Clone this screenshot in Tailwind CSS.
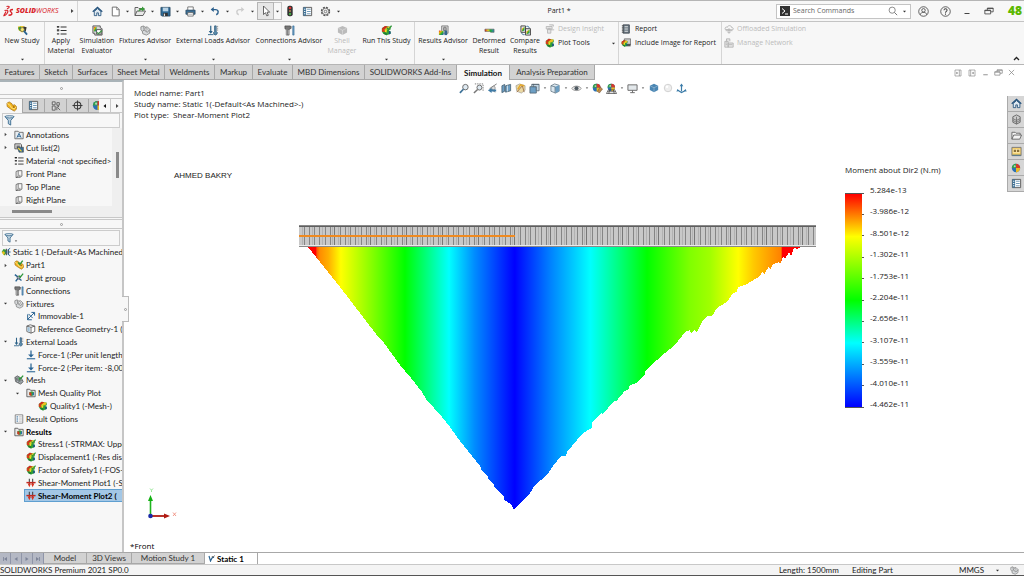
<!DOCTYPE html>
<html lang="en">
<head>
    <meta charset="UTF-8">
    <meta name="viewport" content="width=device-width, initial-scale=1.0">
    <title>Part1 - SOLIDWORKS Simulation</title>
    <script src="https://cdn.jsdelivr.net/npm/@tailwindcss/browser@4"></script>
</head>
<body class="h-screen flex flex-col overflow-hidden bg-white text-[#222] text-[7px] leading-[10px] whitespace-nowrap font-['Open_Sans','Noto_Sans',sans-serif]">

    <!-- Icon set -->
    <svg width="0" height="0" class="absolute" aria-hidden="true">
        <defs>
            <linearGradient id="rain" x1="0" y1="0" x2="1" y2="1"><stop offset="0" stop-color="#e02010"/><stop offset=".3" stop-color="#f5b010"/><stop offset=".6" stop-color="#30b030"/><stop offset="1" stop-color="#1050c0"/></linearGradient>
            <symbol id="dot" viewBox="0 0 6 6"><path d="M1.200 2.200h3.600L3 4.200z" fill="#333"/></symbol>
            <symbol id="right" viewBox="0 0 6 6"><path d="M2 1v4l2.500-2z" fill="#444"/></symbol>
            <symbol id="left" viewBox="0 0 6 6"><path d="M4 1v4L1.500 3z" fill="#111"/></symbol>
            <symbol id="home" viewBox="0 0 12 12"><path d="M2.500 6v4.500h2.700V7.500h1.800v3h2.700V6L6 2.800z" fill="#dfe9f1" stroke="#1f4e79" stroke-width=".9"/><path d="M.8 6.300L6 1.500l5.200 4.800" fill="none" stroke="#1f4e79" stroke-width="1.300"/></symbol>
            <symbol id="new" viewBox="0 0 12 12"><path d="M2.500 1.200h5L10 3.800v7H2.500z" fill="#fff" stroke="#666"/><path d="M7.300 1.200v2.800H10" fill="none" stroke="#666" stroke-width=".8"/></symbol>
            <symbol id="open" viewBox="0 0 12 12"><path d="M1 10.500v-8h3l1 1h5v2" fill="#eee" stroke="#555" stroke-width=".9"/><path d="M1 10.500L3 6h8.500L9 10.500z" fill="#e8e8e8" stroke="#555" stroke-width=".9"/><path d="M4.500 7c0-3 1.500-4 3.500-4V1.500L11 4 8 6.300V5C6.500 5 5.500 5.500 4.500 7z" fill="#3a9a3a"/></symbol>
            <symbol id="save" viewBox="0 0 12 12"><path d="M1 1.500h10v9.500H2L1 10z" fill="#2e6a96" stroke="#24435c" stroke-width=".8"/><path d="M3 1.800h6v4H3z" fill="#b9d3e5"/><path d="M3.500 7.500h5V11h-5z" fill="#333"/><path d="M4.200 8.300h1.300V11H4.200z" fill="#ddd"/></symbol>
            <symbol id="print" viewBox="0 0 12 12"><path d="M3 1h6v4H3z" fill="#fff" stroke="#555" stroke-width=".8"/><path d="M1 4.500h10V9H1z" fill="#3b7097" stroke="#24435c" stroke-width=".8"/><path d="M3 7h6v4H3z" fill="#fff" stroke="#555" stroke-width=".8"/><path d="M4 9h4" stroke="#888" stroke-width=".7"/></symbol>
            <symbol id="undo" viewBox="0 0 12 12"><path d="M3 4.300h3.500c4 0 4.500 4.500 1 6.200" fill="none" stroke="currentColor" stroke-width="1.700"/><path d="M.8 4.300l3.700-3v6z" fill="currentColor"/></symbol>
            <symbol id="pointer" viewBox="0 0 12 12"><path d="M3.500 1v8.500l2-1.800 1.300 3.200 1.500-.6L7 7.200h2.700z" fill="#fff" stroke="#444" stroke-width=".8"/></symbol>
            <symbol id="traffic" viewBox="0 0 12 12"><rect x="3.300" y=".8" width="5.400" height="10.400" rx="2" fill="#333"/><circle cx="6" cy="3" r="1.300" fill="#d33"/><circle cx="6" cy="6" r="1.100" fill="#a85"/><circle cx="6" cy="9" r="1.200" fill="#4a4"/></symbol>
            <symbol id="list" viewBox="0 0 12 12"><path d="M1.500 1.500h9v9h-9z" fill="#fff" stroke="#555"/><path d="M1.500 1.500h3v9h-3z" fill="#3b7097"/><path d="M5.500 3.500h4M5.500 6h4M5.500 8.500h4" stroke="#6590b0"/><path d="M2.200 3.500h1.500M2.200 6h1.500M2.200 8.500h1.500" stroke="#fff"/></symbol>
            <symbol id="gear" viewBox="0 0 12 12"><circle cx="6" cy="6" r="4.300" fill="none" stroke="#555" stroke-width="1.600" stroke-dasharray="2.200 1.177"/><circle cx="6" cy="6" r="3.500" fill="#f7f7f7" stroke="#555" stroke-width=".8"/><circle cx="6" cy="6" r="1.400" fill="none" stroke="#555" stroke-width=".8"/></symbol>
            <symbol id="search" viewBox="0 0 12 12"><circle cx="5" cy="5" r="3.700" fill="none" stroke="#777"/><path d="M7.700 7.700L11 11" stroke="#777" stroke-width="1.200"/></symbol>
            <symbol id="user" viewBox="0 0 12 12"><g fill="none" stroke="#444" stroke-width=".9"><circle cx="6" cy="6" r="5.200"/><circle cx="6" cy="4.700" r="1.900"/><path d="M2.500 9.500C3 7.500 4 7 6 7s3 .5 3.500 2.500"/></g></symbol>
            <symbol id="help" viewBox="0 0 12 12"><g fill="none" stroke="#444" stroke-width=".9"><circle cx="6" cy="6" r="5.200"/><path d="M4.300 4.600C4.500 2.300 7.800 2.500 7.700 4.600 7.600 5.800 6 5.800 6 7.300M6 8.300v1.200" stroke-width="1.100"/></g></symbol>
            <symbol id="restore" viewBox="0 0 12 12"><path d="M4 5V2.500h7V7H8M1 5h7v4.500H1zM1 5.500h7M4 3h7" fill="none" stroke="currentColor"/></symbol>
            <symbol id="min" viewBox="0 0 12 12"><path d="M3 9h6" stroke="currentColor" stroke-width="1.200"/></symbol>
            <symbol id="close" viewBox="0 0 12 12"><path d="M2.500 2.500l7 7m0-7l-7 7" stroke="currentColor"/></symbol>
            <symbol id="study" viewBox="0 0 12 12"><path d="M1 1.500l5-.5 4 1.500-1 5L5 8 1.500 5.500z" fill="#eec31c"/><path d="M1 3l3-1.500 1.500 3L3 6.500z" fill="#3f9a3a"/><path d="M7 1.500l3.500 1-1 4.500-3-2z" fill="#333"/><circle cx="5.800" cy="5" r="2.200" fill="#f8e870" stroke="#555" stroke-width=".7"/><path d="M7.500 6.500l3.500 4" stroke="#2b6594" stroke-width="2"/></symbol>
            <symbol id="studynode" viewBox="0 0 12 12"><path d="M.8 6L3 2.500l3 .8 1 4-3 3z" fill="#3f9a3a"/><path d="M.8 6l2.500-1 1.500 2-1.500 3z" fill="#eec31c"/><path d="M6.500 2v8M9 3.500v5" stroke="#555" stroke-width="1.300"/><path d="M5 6h6.500M7.500 4L11 1.500M7.500 8l3.500 2.500" stroke="#2b6594" stroke-width="1.200"/></symbol>
            <symbol id="material" viewBox="0 0 12 12"><path d="M1 1.300h2.500v2H1zM1 5h2.500v2H1zM1 8.700h2.500v2H1z" fill="#777"/><path d="M1 1.300h2.500v1H1zM1 5h2.500v1H1z" fill="#222"/><path d="M5 2.300h6.500M5 6h6.500M5 9.700h6.500" stroke="#333" stroke-width="1.100"/></symbol>
            <symbol id="evaluator" viewBox="0 0 12 12"><path d="M1 1h8v2l2 1v7H3V9H1z" fill="#d8d8d8" stroke="#555"/><path d="M2 2h3v5H2z" fill="url(#rain)"/><path d="M5 5h5v5H5z" fill="#fff" stroke="#333" stroke-width=".8"/><path d="M5.500 8l1.500 1.500L11 6" fill="none" stroke="#3c9342" stroke-width="1.300"/></symbol>
            <symbol id="fixtures" viewBox="0 0 12 12"><path d="M1 2l3-1 1.500 1.500L8 2l3 3-.5 4L7 11 3 9.500 2.500 7 1 5z" fill="#d6d9db" stroke="#777" stroke-width=".8"/><path d="M4 1.500l.5 4L8 8l2.500-3M4.500 5.500l-2 1.500" fill="none" stroke="#777" stroke-width=".8"/><circle cx="6.500" cy="4.500" r="1.300" fill="#f5f5f5" stroke="#777" stroke-width=".6"/></symbol>
            <symbol id="loads" viewBox="0 0 12 12"><path d="M3 .8v8M8 .8v5" stroke="#2c6288" stroke-width="1.300"/><path d="M.8 6.500h4.400L3 9.500z" fill="#2c6288"/><path d="M0 10.500h6" stroke="#2c6288"/><path d="M7.200 1h1.800v6a2 2 0 1 1-1.800 0z" fill="#5b8cab" stroke="#2c5575" stroke-width=".7"/><path d="M10.500 1v6" stroke="#777" stroke-dasharray="1 1"/></symbol>
            <symbol id="conn" viewBox="0 0 12 12"><path d="M1 1h6v3L5.500 5v6h-3V5L1 4z" fill="#777" stroke="#444" stroke-width=".7"/><path d="M3 5v6M5 5.500v5" stroke="#ddd" stroke-width=".6"/><path d="M7 4l1.500-1M7 2h1.500" stroke="#444" stroke-width=".8"/><path d="M9.500 1h1.500v10H9.500z" fill="#6e9dc0" stroke="#2b6594" stroke-width=".6"/></symbol>
            <symbol id="cube" viewBox="0 0 12 12"><path d="M6 1l5 2.300v5L6 11 1 8.300v-5z" fill="currentColor"/><path d="M1.500 3.500L6 5.700l4.500-2.200M6 5.700V11" fill="none" stroke="#fff" stroke-opacity=".5" stroke-width=".7"/></symbol>
            <symbol id="plot" viewBox="0 0 12 12"><path d="M1 3.500L4.500 1 10.500 2v3L8.500 6l2 1v2.500L6 11.300 2.500 9.500 1 7z" fill="#2f9e36"/><path d="M1 3.500L4.500 1l3 .5L4 4.500z" fill="#d8281d"/><path d="M4 4.500l3.500-3 3 .5L9 4.800 6.500 5.300z" fill="#f0c01e"/><path d="M1 3.500l3 1L4.300 8 1 7z" fill="#dd3a1a"/><path d="M4 4.500l2.500.8L6 8.500 4.300 8z" fill="#f2dd23"/><path d="M4.300 8L6 8.500l.3 2.800-3.800-1.800z" fill="#1f7f32"/><path d="M8.700 6.500l1.800.5v2.500l-2 .8z" fill="#184f8a"/></symbol>
            <symbol id="plotcheck" viewBox="0 0 12 12"><use href="#plot"/><path d="M6.500 3l1.500 2L11.500.8" fill="none" stroke="#2d963a" stroke-width="1.400"/></symbol>
            <symbol id="results" viewBox="0 0 12 12"><path d="M4 1h7v8H4z" fill="#ddd" stroke="#666" stroke-width=".8"/><path d="M6 3c0-1 3-1 3 0v3H6z" fill="#aaa" stroke="#555" stroke-width=".6"/><path d="M1 6l5 .5V11H1z" fill="url(#rain)"/><path d="M7 6h3v5H7z" fill="#33658a"/></symbol>
            <symbol id="deformed" viewBox="0 0 12 12"><linearGradient id="bar"><stop offset="0" stop-color="#d22"/><stop offset=".35" stop-color="#ed2"/><stop offset=".6" stop-color="#2a3"/><stop offset="1" stop-color="#38b"/></linearGradient><path d="M1 4.500h10v3.500H7.500L6 7H1z" fill="url(#bar)" stroke="#555" stroke-width=".6"/></symbol>
            <symbol id="compare" viewBox="0 0 12 12"><path d="M1 1h5v7H1zM6 4h5.500v7H6z" fill="#e5e5e5" stroke="#444"/><path d="M2 4l3-2v4L2 7z" fill="url(#rain)"/><path d="M7 7l3.500-2v4L7 10z" fill="url(#rain)"/><path d="M7 1.500c2-.5 3 .5 3 2M5 10.500c-2 .3-3-.5-3-2" fill="none" stroke="#2b6594"/></symbol>
            <symbol id="insight" viewBox="0 0 12 12"><path d="M1.500 3h7v3h-7zM3 6h4v5H3zM7 7h4M5 1h5v2" fill="#e5e5e5" stroke="#b5b5b5"/><circle cx="5" cy="6" r="1.500" fill="#bbb"/></symbol>
            <symbol id="report" viewBox="0 0 12 12"><path d="M2.500 1h7.500v10H2.500z" fill="#6d7a84" stroke="#3d464d"/><path d="M4.300 3h4M4.300 5h4M4.300 7h4M4.300 9h4" stroke="#eee" stroke-width=".8"/><path d="M1 2h2M1 4h2M1 6h2M1 8h2M1 10h2" stroke="#444" stroke-width=".8"/></symbol>
            <symbol id="include" viewBox="0 0 12 12"><path d="M4 1h7.500v7H4z" fill="#ccc" stroke="#555" stroke-width=".8"/><path d="M5.500 7h6v3h-6z" fill="#555"/><g transform="translate(0 2) scale(.75)"><use href="#plot" width="12" height="12"/></g></symbol>
            <symbol id="offload" viewBox="0 0 12 12"><path d="M1.500 6.500C.5 4 3 3 4 4c.5-3 5-2.500 5 0 2 0 2.500 2 1.500 3zM2 8h8M6 5v6M4 9.500L6 11l2-1.500" fill="none" stroke="#b0b0b0"/></symbol>
            <symbol id="network" viewBox="0 0 12 12"><path d="M1 4h4v7H1zM5 6h6v5H5zM3 4V1h4v3" fill="#e6e6e6" stroke="#b0b0b0"/><path d="M2 6h2M2 8h2M6 8h4" stroke="#b0b0b0"/></symbol>
            <symbol id="part" viewBox="0 0 12 12"><path d="M1 2.500L3.500 1l3 2 .8 2 2-1 2 2v3L9 11 5.500 9 1.300 6z" fill="#f3b61f" stroke="#a56e10" stroke-width=".8"/><path d="M1.200 2.700l3 1.800L6 7.500l3 1 2-2" fill="none" stroke="#fbe28a"/><circle cx="8.500" cy="6.500" r="1" fill="#a56e10"/></symbol>
            <symbol id="partcheck" viewBox="0 0 12 12"><use href="#part"/><path d="M5 3l2 2.300L10.500.7" fill="none" stroke="#2d963a" stroke-width="1.700"/></symbol>
            <symbol id="config" viewBox="0 0 12 12"><path d="M1.500 1h3.500v3.500H1.500zM1.500 6h3.500v5H1.500zM7 2h3v3H7z" fill="#ddd" stroke="#555"/><path d="M7 6h2.500L8 8l3 3M7 7v4" fill="none" stroke="#555"/></symbol>
            <symbol id="target" viewBox="0 0 12 12"><circle cx="6" cy="6" r="3.700" fill="none" stroke="#333" stroke-width="1.100"/><path d="M6 .5v11M.5 6h11" stroke="#333"/></symbol>
            <symbol id="ball" viewBox="0 0 12 12"><circle cx="6" cy="6" r="5" fill="#2c70b4"/><path d="M6 6L1 6A5 5 0 0 1 6 1z" fill="#34a04a"/><path d="M6 6V1A5 5 0 0 1 11 6z" fill="#d8392a"/><path d="M6 6h5A5 5 0 0 1 6 11z" fill="#eab925"/><circle cx="4.500" cy="4" r="1.200" fill="#fff" fill-opacity=".6"/></symbol>
            <symbol id="funnel" viewBox="0 0 12 12"><path d="M1 1.500h10L7.300 6v5L4.700 9.500V6z" fill="#b9cfde" stroke="#2b5f85" stroke-width=".9"/><ellipse cx="6" cy="2" rx="4.700" ry="1.200" fill="#e6eff5" stroke="#2b5f85" stroke-width=".8"/></symbol>
            <symbol id="annot" viewBox="0 0 12 12"><path d="M1 10.500v-9h4l1 1.300h5v7.700z" fill="#e8edf1" stroke="#555" stroke-width=".9"/><path d="M3.500 9.200L6 4l2.500 5.200M4.300 7.500h3.400" fill="none" stroke="#2b6594" stroke-width="1.100"/></symbol>
            <symbol id="cut" viewBox="0 0 12 12"><path d="M1 1h7l1 1v5H1z" fill="#ddd" stroke="#444"/><path d="M3 3h4v3H3z" fill="#777"/><path d="M4 5h7.300v6H6z" fill="#3b7097" stroke="#333" stroke-width=".6"/><path d="M5 6l4 4" stroke="#f4cf32" stroke-width="1.500"/></symbol>
            <symbol id="plane" viewBox="0 0 12 12"><path d="M2.500 3L5 2v7l-2.500 1.500zM5 2h4.500v6.500L7 10H2.500M7 10V7" fill="none" stroke="#555" stroke-width=".9"/></symbol>
            <symbol id="joint" viewBox="0 0 12 12"><path d="M1 2l4 3 3-1M2 10l3-4 4 3" fill="none" stroke="#2b6594" stroke-width="1.700"/><circle cx="5.500" cy="5.500" r="1.800" fill="#9aabb8" stroke="#333" stroke-width=".6"/><path d="M6 3l1.500 2L11 .8" fill="none" stroke="#2d963a" stroke-width="1.500"/></symbol>
            <symbol id="immov" viewBox="0 0 12 12"><path d="M1.500 10.500L10 2M6.500 1.700H10.300V5.500M2 4v6.500h5M3 3.500l5 5" fill="none" stroke="#2b6594" stroke-width="1.200"/></symbol>
            <symbol id="refgeo" viewBox="0 0 12 12"><path d="M1 2.500L5 1l5.500 1.500V9L6 11 1 9z" fill="#fff" stroke="#444" stroke-width=".9"/><path d="M1 2.500l5 1.500 4.500-1.500M6 4v7" fill="none" stroke="#444" stroke-width=".9"/><path d="M1.800 3.500l2.700.8v5.200l-2.700-.8z" fill="#9dc0d8"/></symbol>
            <symbol id="force" viewBox="0 0 12 12"><path d="M6 .5v7" stroke="#2b6594" stroke-width="1.500"/><path d="M2.500 5.300h7L6 9z" fill="#2b6594"/><path d="M1 10.500h10" stroke="#2b6594" stroke-width="1.300"/></symbol>
            <symbol id="mesh" viewBox="0 0 12 12"><path d="M1 3l3-2 5 3 2 4-3 3-6-3z" fill="#aab3b8" stroke="#444" stroke-width=".8"/><path d="M2 5l7 4M4 2l-1 6M7 3L5.500 9.500M1 3l6 3.500 3.500.5" fill="none" stroke="#444" stroke-width=".5"/><path d="M5.500 3l1.500 2.300L11 .7" fill="none" stroke="#2d963a" stroke-width="1.600"/></symbol>
            <symbol id="folder" viewBox="0 0 12 12"><path d="M1 10.500v-9h3.500l1 1.300H11v7.700z" fill="#e8e8e8" stroke="#444" stroke-width=".9"/><path d="M4 5l3-1 2.500 1v3.500L7 9.700 4 8.500z" fill="#3c9d3e"/><path d="M4 5l2.500.7v4L4 8.500z" fill="#d63322"/><path d="M8 6l1.500-1v3.500L8 9z" fill="#236fb5"/></symbol>
            <symbol id="options" viewBox="0 0 12 12"><path d="M1.500 1h9v10h-9z" fill="#fff" stroke="#777"/><path d="M3 3.500h2M3 6h2M3 8.500h2" stroke="#2b6594" stroke-width="1.200"/><path d="M6 3.500h3.500M6 6h3.500M6 8.500h3.500" stroke="#999" stroke-width=".8"/></symbol>
            <symbol id="shear" viewBox="0 0 12 12"><path d="M4 1v7M8 1v7" stroke="#444" stroke-width="1.300"/><path d="M.5 5.500h11" stroke="#c22a22" stroke-width="1.700"/><path d="M2 6.500h4L4 11zM6 6.500h4L8 11z" fill="#d8321f"/></symbol>
            <symbol id="zoomfit" viewBox="0 0 12 12"><circle cx="7" cy="4.500" r="3" fill="#dfeaf2" stroke="#666"/><path d="M4.800 6.800L1 10.800" stroke="#3b7097" stroke-width="1.800"/></symbol>
            <symbol id="zoomarea" viewBox="0 0 12 12"><path d="M2 1h9v8" fill="none" stroke="#777" stroke-dasharray="1.500 1"/><circle cx="7" cy="5" r="2.700" fill="#dfeaf2" stroke="#666"/><path d="M5 7l-4 4" stroke="#777" stroke-width="1.600"/></symbol>
            <symbol id="prev" viewBox="0 0 12 12"><path d="M10.500 1L3 6l6 4" fill="none" stroke="#777"/><circle cx="7" cy="5.500" r="2" fill="#ddd" stroke="#777" stroke-width=".7"/><path d="M1 8l4-2.500v1.700h5v2H5V11z" fill="#3e7ba6"/></symbol>
            <symbol id="section" viewBox="0 0 12 12"><path d="M1 3l3-1.500V9L1 10.500zM5 3l5.500-1.500v7L5 10z" fill="#6d9fc4" stroke="#3c5566" stroke-width=".8"/><path d="M7 2.800v6.500" stroke="#dce8f0"/></symbol>
            <symbol id="wand" viewBox="0 0 12 12"><path d="M1 3l4-2 6 2v5l-4 3-5-2z" fill="#ead9a4" stroke="#888" stroke-width=".6"/><path d="M2 10L8 3l2 7" stroke="#a0714a" fill="none"/><path d="M3 7l3-5 4 1" fill="none" stroke="#e3a72a" stroke-width="1.500"/></symbol>
            <symbol id="orient" viewBox="0 0 12 12"><path d="M1 4h7v7H1z" fill="#6d9fc4" stroke="#4c5d69" stroke-width=".8"/><path d="M3 4V1.500h8V8.500H8V4z" fill="#c2d6e4" stroke="#4c5d69" stroke-width=".8"/><path d="M3 1.500h8M5 1v3" stroke="#4c5d69" stroke-width=".7"/></symbol>
            <symbol id="display" viewBox="0 0 12 12"><path d="M1 3l4-2 5 1.500V9l-4 2-5-2z" fill="#dbe7ef" stroke="#5b6f7d" stroke-width=".8"/><path d="M5.500 4L10 2.500V9l-4 2z" fill="#6b9dc1"/><path d="M1 3l4.500 1.200V11" fill="none" stroke="#5b6f7d" stroke-width=".8"/></symbol>
            <symbol id="eye" viewBox="0 0 12 12"><path d="M.8 6C3 2.500 9 2.500 11.200 6 9 9 3 9 .8 6z" fill="#eee" stroke="#777" stroke-width=".8"/><circle cx="6" cy="5.800" r="2.200" fill="#4f5a62"/></symbol>
            <symbol id="appear" viewBox="0 0 12 12"><g transform="scale(.85)"><use href="#ball" width="12" height="12"/></g><path d="M6 9l3-4.500 2.500 2L8 11z" fill="#bf8a50" stroke="#6f5230" stroke-width=".6"/></symbol>
            <symbol id="scene" viewBox="0 0 12 12"><g transform="translate(1 0) scale(.8)"><use href="#ball" width="12" height="12"/></g><path d="M.5 11.500l2-4h7l2 4zM4 7.500l-1 4M8 7.500l1 4M2 9.500h8" fill="none" stroke="#444" stroke-width=".8"/></symbol>
            <symbol id="monitor" viewBox="0 0 12 12"><path d="M1 2h10v6H1z" fill="#e3e8eb" stroke="#666"/><path d="M6 8v2.500M3.500 10.500h5" stroke="#666"/></symbol>
            <symbol id="triadup" viewBox="0 0 12 12"><path d="M6 9V2M2 8l4 2.500L11 8" fill="none" stroke="#3b7ba8" stroke-width="1.300"/><path d="M4 3.500L6 .5l2 3zM.5 9.500l1-3 2 2zM11.500 9.500l-1-3-2 2z" fill="#3b7ba8"/></symbol>
            <symbol id="openfolder" viewBox="0 0 12 12"><path d="M1 10V2.500h3.500l1 1H10v2M1 10l2-4.500h8.500L9.500 10z" fill="#f3f3f3" stroke="#666"/></symbol>
            <symbol id="library" viewBox="0 0 12 12"><path d="M2 3l4-2 4 2v6l-4 2-4-2z" fill="#ccc" stroke="#666"/><path d="M2 5l4 2 4-2M2 7l4 2 4-2M6 3v8" fill="none" stroke="#666" stroke-width=".8"/></symbol>
            <symbol id="palette" viewBox="0 0 12 12"><path d="M1 1.500h10v9H1z" fill="#f3c95c" stroke="#777"/><path d="M2 3h8v5H2z" fill="#f8e2a0"/><path d="M3 4h2.500v2.500H3zM6.500 4H9v2.500H6.500z" fill="#8a7038"/><path d="M1.500 10h9" stroke="#3b7097"/></symbol>
            <symbol id="paneicon" viewBox="0 0 12 12"><path d="M1.500 1.500h9v9h-9zM4 1.500v9" fill="none" stroke="#888"/><path d="M5.500 6l3-2v4z" fill="#888"/></symbol>
        </defs>
    </svg>

    <!-- Title bar -->
    <header class="flex items-center h-[22px] shrink-0 bg-[#f7f7f7] border-t border-b border-t-[#b5b5b5] border-b-[#c4c4c4]">
        <div class="flex items-center w-[78px] h-full border-r border-[#d5d5d5] pl-[3px]">
            <svg class="w-[11px] h-3" viewBox="0 0 11 12" fill="none" stroke="#d8232a"><path d="M3.500 1.500c3-.8 4 .8.5 2.500M1.500 5.500c4-1 4 1 2.500 3C3 10 1.500 10.800.5 11M3 6.500L.7 11" stroke-width="1.200"/><path d="M10 4.500C7 4.500 6.500 5.800 8 7s1.500 3.300-2.500 3.300" stroke-width="1.400"/></svg>
            <span class="ml-[2px] text-[#d8232a] italic"><b class="font-extrabold">SOLID</b>WORKS</span>
            <button class="ml-auto mr-[2px]" aria-label="Expand menu"><svg class="size-[6px]"><use href="#right"/></svg></button>
        </div>
        <nav class="flex items-center pl-[8px] text-[#2b5f8c]" aria-label="Quick access">
            <button class="w-[22px] flex justify-center" aria-label="Home"><svg class="size-[11px]"><use href="#home"/></svg></button>
            <button class="w-[14px] flex justify-center" aria-label="New"><svg class="size-[11px]"><use href="#new"/></svg></button>
            <button class="w-[11px] flex justify-center" aria-label="New menu"><svg class="size-[5px]"><use href="#dot"/></svg></button>
            <button class="w-[14px] flex justify-center" aria-label="Open"><svg class="size-[12px]"><use href="#open"/></svg></button>
            <button class="w-[11px] flex justify-center" aria-label="Open menu"><svg class="size-[5px]"><use href="#dot"/></svg></button>
            <button class="w-[14px] flex justify-center" aria-label="Save"><svg class="size-[11px]"><use href="#save"/></svg></button>
            <button class="w-[11px] flex justify-center" aria-label="Save menu"><svg class="size-[5px]"><use href="#dot"/></svg></button>
            <button class="w-[14px] flex justify-center" aria-label="Print"><svg class="size-[11px]"><use href="#print"/></svg></button>
            <button class="w-[11px] flex justify-center" aria-label="Print menu"><svg class="size-[5px]"><use href="#dot"/></svg></button>
            <button class="w-[14px] flex justify-center" aria-label="Undo"><svg class="size-[10px]"><use href="#undo"/></svg></button>
            <button class="w-[11px] flex justify-center" aria-label="Undo menu"><svg class="size-[5px]"><use href="#dot"/></svg></button>
            <button class="w-[14px] flex justify-center text-[#ccc]" aria-label="Redo"><svg class="size-[10px] -scale-x-100"><use href="#undo"/></svg></button>
            <button class="w-[10px] flex justify-center" aria-label="Redo menu"><svg class="size-[5px]"><use href="#dot"/></svg></button>
            <button class="w-[17px] h-[18px] flex justify-center items-center bg-[#e6e6e6] border border-[#b5b5b5]" aria-label="Select"><svg class="size-[12px]"><use href="#pointer"/></svg></button>
            <button class="w-[8px] h-[18px] flex justify-center items-center border border-l-0 border-[#c5c5c5]" aria-label="Select menu"><svg class="size-[5px]"><use href="#dot"/></svg></button>
            <button class="w-[16px] flex justify-center" aria-label="Rebuild"><svg class="size-[12px]"><use href="#traffic"/></svg></button>
            <button class="w-[18px] flex justify-center" aria-label="File properties"><svg class="size-[11px]"><use href="#list"/></svg></button>
            <button class="w-[18px] flex justify-center" aria-label="Options"><svg class="size-[11px]"><use href="#gear"/></svg></button>
            <button class="w-[8px] flex justify-center" aria-label="Options menu"><svg class="size-[5px]"><use href="#dot"/></svg></button>
        </nav>
        <h1 class="flex-1 text-center">Part1 *</h1>
        <div class="flex items-center w-[135px] h-[15px] bg-white border border-[#c4c4c4] px-[3px]">
            <svg class="size-[10px]" viewBox="0 0 10 10"><path d="M0 0h10v10H0z" fill="#333"/><path d="M2 2.500L5 5 2 7.500M5 8h3" fill="none" stroke="#fff"/></svg>
            <input type="text" aria-label="Search Commands" placeholder="Search Commands" class="flex-1 min-w-0 ml-[3px] outline-none placeholder:text-[#666]">
            <button aria-label="Search"><svg class="size-[10px]"><use href="#search"/></svg></button>
            <button class="ml-[4px]" aria-label="Search menu"><svg class="size-[5px]"><use href="#dot"/></svg></button>
        </div>
        <div class="flex items-center w-[113px] text-[#444]">
            <button class="w-[24px] flex justify-center" aria-label="Account"><svg class="size-[11px]"><use href="#user"/></svg></button>
            <button class="w-[20px] flex justify-center" aria-label="Help"><svg class="size-[11px]"><use href="#help"/></svg></button>
            <button class="w-[24px] flex justify-center" aria-label="Minimize"><svg class="size-[10px]"><use href="#min"/></svg></button>
            <button class="w-[20px] flex justify-center" aria-label="Restore"><svg class="size-[10px]"><use href="#restore"/></svg></button>
            <span class="flex-1 pr-[2px] text-right text-[#5cb800] text-[12px] leading-[14px] font-extrabold">48</span>
        </div>
    </header>

    <!-- Ribbon -->
    <section class="flex h-[43px] shrink-0 bg-[#f7f7f7] border-b border-[#b5b5b5]" aria-label="Simulation ribbon">
        <button class="w-[45px] border-r border-[#d5d5d5] pt-[3px] flex flex-col items-center"><svg class="size-[11px] shrink-0"><use href="#study"/></svg><span>New Study</span><svg class="size-[5px] mt-auto mb-[2px]"><use href="#dot"/></svg></button>
        <button class="w-[32px] pt-[3px] flex flex-col items-center"><svg class="size-[11px] shrink-0"><use href="#material"/></svg><span>Apply<br>Material</span></button>
        <button class="w-[40px] pt-[3px] flex flex-col items-center"><svg class="size-[11px] shrink-0"><use href="#evaluator"/></svg><span>Simulation<br>Evaluator</span></button>
        <button class="w-[56px] pt-[3px] flex flex-col items-center"><svg class="size-[11px] shrink-0"><use href="#fixtures"/></svg><span>Fixtures Advisor</span><svg class="size-[5px] mt-auto mb-[2px]"><use href="#dot"/></svg></button>
        <button class="w-[80px] pt-[3px] flex flex-col items-center"><svg class="size-[11px] shrink-0"><use href="#loads"/></svg><span>External Loads Advisor</span><svg class="size-[5px] mt-auto mb-[2px]"><use href="#dot"/></svg></button>
        <button class="w-[72px] pt-[3px] flex flex-col items-center"><svg class="size-[11px] shrink-0"><use href="#conn"/></svg><span>Connections Advisor</span><svg class="size-[5px] mt-auto mb-[2px]"><use href="#dot"/></svg></button>
        <button class="w-[34px] pt-[3px] flex flex-col items-center text-[#bbb]" disabled><svg class="size-[11px] shrink-0"><use href="#cube"/></svg><span>Shell<br>Manager</span></button>
        <button class="w-[56px] border-r border-[#d5d5d5] pt-[3px] flex flex-col items-center"><svg class="size-[11px] shrink-0"><use href="#plotcheck"/></svg><span>Run This Study</span><svg class="size-[5px] mt-auto mb-[2px]"><use href="#dot"/></svg></button>
        <button class="w-[56px] pt-[3px] flex flex-col items-center"><svg class="size-[11px] shrink-0"><use href="#results"/></svg><span>Results Advisor</span><svg class="size-[5px] mt-auto mb-[2px]"><use href="#dot"/></svg></button>
        <button class="w-[36px] pt-[3px] flex flex-col items-center"><svg class="size-[11px] shrink-0"><use href="#deformed"/></svg><span>Deformed<br>Result</span></button>
        <button class="w-[36px] pt-[3px] flex flex-col items-center"><svg class="size-[11px] shrink-0"><use href="#compare"/></svg><span>Compare<br>Results</span></button>
        <div class="w-[76px] border-r border-[#d5d5d5] pl-[2px] pt-[2px] flex flex-col gap-[4px]">
            <button class="flex items-center gap-[3px] text-[#bbb]" disabled><svg class="size-[10px]"><use href="#insight"/></svg>Design Insight</button>
            <button class="flex items-center gap-[3px]"><svg class="size-[10px]"><use href="#plot"/></svg>Plot Tools<svg class="size-[5px] ml-auto mr-[2px]"><use href="#dot"/></svg></button>
        </div>
        <div class="w-[103px] border-r border-[#d5d5d5] pl-[2px] pt-[2px] flex flex-col gap-[4px]">
            <button class="flex items-center gap-[4px]"><svg class="size-[10px]"><use href="#report"/></svg>Report</button>
            <button class="flex items-center gap-[4px]"><svg class="size-[10px]"><use href="#include"/></svg>Include Image for Report</button>
        </div>
        <div class="pl-[2px] pt-[2px] flex flex-col gap-[4px] text-[#bbb]">
            <button class="flex items-center gap-[3px]" disabled><svg class="size-[10px]"><use href="#offload"/></svg>Offloaded Simulation</button>
            <button class="flex items-center gap-[3px]" disabled><svg class="size-[10px]"><use href="#network"/></svg>Manage Network</button>
        </div>
        <button class="ml-auto self-end mr-[4px] mb-[3px]" aria-label="Collapse ribbon"><svg class="w-[7px] h-[5px]" viewBox="0 0 7 5"><path d="M1 4l2.500-2.500L6 4" fill="none" stroke="#222" stroke-width="1.300"/></svg></button>
    </section>

    <!-- Command tabs -->
    <nav class="flex h-[15px] shrink-0 bg-white text-[#333] text-[8px] font-['Lato','Open_Sans',sans-serif]" aria-label="Command tabs">
        <button class="w-[40px] bg-[#d2d2d2] border-r border-b border-[#a8a8a8]">Features</button>
        <button class="w-[33px] bg-[#d2d2d2] border-r border-b border-[#a8a8a8]">Sketch</button>
        <button class="w-[40px] bg-[#d2d2d2] border-r border-b border-[#a8a8a8]">Surfaces</button>
        <button class="w-[52px] bg-[#d2d2d2] border-r border-b border-[#a8a8a8]">Sheet Metal</button>
        <button class="w-[50px] bg-[#d2d2d2] border-r border-b border-[#a8a8a8]">Weldments</button>
        <button class="w-[38px] bg-[#d2d2d2] border-r border-b border-[#a8a8a8]">Markup</button>
        <button class="w-[40px] bg-[#d2d2d2] border-r border-b border-[#a8a8a8]">Evaluate</button>
        <button class="w-[72px] bg-[#d2d2d2] border-r border-b border-[#a8a8a8]">MBD Dimensions</button>
        <button class="w-[92px] bg-[#d2d2d2] border-r border-b border-[#a8a8a8]">SOLIDWORKS Add-Ins</button>
        <button class="w-[53px] bg-[#f7f7f7] border-r border-[#a8a8a8] font-bold text-[#111]">Simulation</button>
        <button class="w-[85px] bg-[#d2d2d2] border-r border-b border-[#a8a8a8]">Analysis Preparation</button>
        <div class="ml-auto flex items-center text-[#888] pr-[6px]">
            <button class="w-[14px] flex justify-center" aria-label="Previous pane"><svg class="size-[8px] -scale-x-100"><use href="#paneicon"/></svg></button>
            <button class="w-[14px] flex justify-center" aria-label="Next pane"><svg class="size-[8px]"><use href="#paneicon"/></svg></button>
            <button class="w-[13px] flex justify-center" aria-label="Minimize document"><svg class="size-[9px]"><use href="#min"/></svg></button>
            <button class="w-[13px] flex justify-center" aria-label="Restore document"><svg class="size-[9px]"><use href="#restore"/></svg></button>
            <button class="w-[13px] flex justify-center" aria-label="Close document"><svg class="size-[9px]"><use href="#close"/></svg></button>
        </div>
    </nav>

    <div class="flex-1 min-h-0 flex">
        <!-- Feature manager and study tree -->
        <aside class="relative w-[124px] shrink-0 bg-[#f7f7f7] border-t-2 border-r-2 border-t-[#a9b3b8] border-r-[#c6c6c6] flex flex-col text-[8px] font-['Lato','Open_Sans',sans-serif]">
            <div class="h-[13px] flex items-center justify-center border-b border-[#c8c8c8]"><span class="size-[3px] rounded-full border border-[#999]"></span></div>
            <div class="h-[4px] border-b border-[#c8c8c8]"></div>
            <div class="flex h-[14px] shrink-0" role="tablist">
                <button class="w-[22px] flex items-center justify-center bg-[#f7f7f7]" aria-label="Feature tree"><svg class="size-[11px]"><use href="#part"/></svg></button>
                <button class="w-[22px] flex items-center justify-center bg-[#d2d2d2] border-l border-b border-[#a8a8a8]" aria-label="Properties"><svg class="size-[11px]"><use href="#list"/></svg></button>
                <button class="w-[22px] flex items-center justify-center bg-[#d2d2d2] border-l border-b border-[#a8a8a8]" aria-label="Configurations"><svg class="size-[10px]"><use href="#config"/></svg></button>
                <button class="w-[22px] flex items-center justify-center bg-[#d2d2d2] border-l border-b border-[#a8a8a8]" aria-label="Dimensions"><svg class="size-[11px]"><use href="#target"/></svg></button>
                <button class="w-[11px] overflow-hidden flex items-center bg-[#d2d2d2] border-l border-b border-[#a8a8a8] pl-[3px]" aria-label="Display manager"><svg class="size-[11px] shrink-0"><use href="#ball"/></svg></button>
                <button class="w-[11px] flex items-center justify-center border-b border-[#c8c8c8]" aria-label="Scroll tabs left"><svg class="size-[6px]"><use href="#left"/></svg></button>
                <button class="w-[12px] flex items-center justify-center border-l border-b border-[#c8c8c8]" aria-label="Scroll tabs right"><svg class="size-[6px]"><use href="#right"/></svg></button>
            </div>
            <label class="flex items-center h-[15px] shrink-0 mx-[2px] border border-[#ccc] pl-[1px]"><svg class="size-[11px] shrink-0"><use href="#funnel"/></svg><input type="text" aria-label="Filter feature tree" class="min-w-0 flex-1 outline-none"></label>
            <div class="flex h-[78px] shrink-0">
                <ul class="w-[112px] overflow-hidden grid auto-rows-fr pl-[3px]">
                    <li class="flex items-center"><svg class="size-[5px] mr-[6px]"><use href="#right"/></svg><svg class="size-[10px] mr-[2px]"><use href="#annot"/></svg>Annotations</li>
                    <li class="flex items-center"><svg class="size-[5px] mr-[6px]"><use href="#right"/></svg><svg class="size-[10px] mr-[2px]"><use href="#cut"/></svg>Cut list(2)</li>
                    <li class="flex items-center pl-[11px]"><svg class="size-[10px] mr-[2px] shrink-0"><use href="#material"/></svg>Material &lt;not specified&gt;</li>
                    <li class="flex items-center pl-[11px]"><svg class="size-[10px] mr-[2px]"><use href="#plane"/></svg>Front Plane</li>
                    <li class="flex items-center pl-[11px]"><svg class="size-[10px] mr-[2px]"><use href="#plane"/></svg>Top Plane</li>
                    <li class="flex items-center pl-[11px]"><svg class="size-[10px] mr-[2px]"><use href="#plane"/></svg>Right Plane</li>
                </ul>
                <div class="flex-1 bg-[#efefef] flex justify-center pt-[24px]"><span class="w-[3px] h-[26px] bg-[#8a8a8a]"></span></div>
            </div>
            <div class="h-[11px] shrink-0 bg-[#efefef] flex items-center pl-[12px]"><span class="w-[40px] h-[3px] bg-[#8a8a8a]"></span></div>
            <div class="h-[3px] shrink-0 border-t border-b border-[#c8c8c8]"></div>
            <div class="h-[9px] shrink-0 flex items-center justify-center border-b border-[#c8c8c8]"><span class="size-[3px] rounded-full border border-[#999]"></span></div>
            <label class="flex items-center h-[16px] shrink-0 mt-[1px] mx-[2px] border border-[#ccc] pl-[1px]"><svg class="size-[10px] shrink-0"><use href="#funnel"/></svg><svg class="size-[4px] self-end mb-[2px]"><use href="#dot"/></svg><input type="text" aria-label="Filter study tree" class="min-w-0 flex-1 outline-none"></label>
            <ul class="h-64 shrink-0 overflow-hidden grid auto-rows-fr">
                <li class="flex items-center pl-[1px]"><svg class="size-[10px] mr-[2px] shrink-0"><use href="#studynode"/></svg>Static 1 (-Default&lt;As Machined</li>
                <li class="flex items-center pl-[3px]"><svg class="size-[5px] mr-[6px]"><use href="#right"/></svg><svg class="size-[10px] mr-[2px]"><use href="#partcheck"/></svg>Part1</li>
                <li class="flex items-center pl-[14px]"><svg class="size-[10px] mr-[2px]"><use href="#joint"/></svg>Joint group</li>
                <li class="flex items-center pl-[14px]"><svg class="size-[10px] mr-[2px]"><use href="#conn"/></svg>Connections</li>
                <li class="flex items-center pl-[3px]"><svg class="size-[5px] mr-[6px]"><use href="#dot"/></svg><svg class="size-[10px] mr-[2px]"><use href="#fixtures"/></svg>Fixtures</li>
                <li class="flex items-center pl-[26px]"><svg class="size-[10px] mr-[2px]"><use href="#immov"/></svg>Immovable-1</li>
                <li class="flex items-center pl-[26px]"><svg class="size-[10px] mr-[2px] shrink-0"><use href="#refgeo"/></svg>Reference Geometry-1 (</li>
                <li class="flex items-center pl-[3px]"><svg class="size-[5px] mr-[6px]"><use href="#dot"/></svg><svg class="size-[10px] mr-[2px]"><use href="#loads"/></svg>External Loads</li>
                <li class="flex items-center pl-[26px]"><svg class="size-[10px] mr-[2px] shrink-0"><use href="#force"/></svg>Force-1 (:Per unit length</li>
                <li class="flex items-center pl-[26px]"><svg class="size-[10px] mr-[2px] shrink-0"><use href="#force"/></svg>Force-2 (:Per item: -8,00</li>
                <li class="flex items-center pl-[3px]"><svg class="size-[5px] mr-[6px]"><use href="#dot"/></svg><svg class="size-[10px] mr-[2px]"><use href="#mesh"/></svg>Mesh</li>
                <li class="flex items-center pl-[15px]"><svg class="size-[5px] mr-[6px]"><use href="#dot"/></svg><svg class="size-[10px] mr-[2px]"><use href="#folder"/></svg>Mesh Quality Plot</li>
                <li class="flex items-center pl-[38px]"><svg class="size-[10px] mr-[2px]"><use href="#plot"/></svg>Quality1 (-Mesh-)</li>
                <li class="flex items-center pl-[14px]"><svg class="size-[10px] mr-[2px]"><use href="#options"/></svg>Result Options</li>
                <li class="flex items-center pl-[3px] font-bold text-black"><svg class="size-[5px] mr-[6px]"><use href="#dot"/></svg><svg class="size-[10px] mr-[2px]"><use href="#folder"/></svg>Results</li>
                <li class="flex items-center pl-[26px]"><svg class="size-[10px] mr-[2px] shrink-0"><use href="#plotcheck"/></svg>Stress1 (-STRMAX: Uppe</li>
                <li class="flex items-center pl-[26px]"><svg class="size-[10px] mr-[2px] shrink-0"><use href="#plotcheck"/></svg>Displacement1 (-Res dis</li>
                <li class="flex items-center pl-[26px]"><svg class="size-[10px] mr-[2px] shrink-0"><use href="#plotcheck"/></svg>Factor of Safety1 (-FOS-</li>
                <li class="flex items-center pl-[26px]"><svg class="size-[10px] mr-[2px] shrink-0"><use href="#shear"/></svg>Shear-Moment Plot1 (-S</li>
                <li class="flex items-center ml-[24px] pl-[1px] bg-[#a3c7e6] border border-[#5f9fd0] font-bold text-black"><svg class="size-[10px] mr-[2px] shrink-0"><use href="#shear"/></svg>Shear-Moment Plot2 (</li>
            </ul>
            <button class="absolute -right-[7px] top-[214px] w-[7px] h-[26px] bg-[#f7f7f7] border border-l-0 border-[#bbb] flex items-center justify-center z-10" aria-label="Collapse panel"><span class="size-[3px] rounded-full border border-[#999]"></span></button>
        </aside>

        <!-- Graphics area -->
        <main class="relative flex-1 overflow-hidden bg-white">
            <div class="flex justify-center items-center h-[16px] pr-[2px]">
                <button class="w-[14px] flex justify-center" aria-label="Zoom to fit"><svg class="size-[11px]"><use href="#zoomfit"/></svg></button>
                <button class="w-[14px] flex justify-center" aria-label="Zoom to area"><svg class="size-[11px]"><use href="#zoomarea"/></svg></button>
                <button class="w-[14px] flex justify-center" aria-label="Previous view"><svg class="size-[11px]"><use href="#prev"/></svg></button>
                <button class="w-[14px] flex justify-center" aria-label="Section view"><svg class="size-[11px]"><use href="#section"/></svg></button>
                <button class="w-[14px] flex justify-center" aria-label="Dynamic annotation"><svg class="size-[11px]"><use href="#wand"/></svg></button>
                <button class="w-[13px] flex justify-center" aria-label="View orientation"><svg class="size-[11px]"><use href="#orient"/></svg></button>
                <button class="w-[8px] flex justify-center" aria-label="Orientation menu"><svg class="size-[4px]"><use href="#dot"/></svg></button>
                <button class="w-[13px] flex justify-center" aria-label="Display style"><svg class="size-[11px]"><use href="#display"/></svg></button>
                <button class="w-[8px] flex justify-center" aria-label="Display menu"><svg class="size-[4px]"><use href="#dot"/></svg></button>
                <button class="w-[13px] flex justify-center" aria-label="Hide or show items"><svg class="size-[11px]"><use href="#eye"/></svg></button>
                <button class="w-[8px] flex justify-center" aria-label="Visibility menu"><svg class="size-[4px]"><use href="#dot"/></svg></button>
                <button class="w-[14px] flex justify-center" aria-label="Edit appearance"><svg class="size-[11px]"><use href="#appear"/></svg></button>
                <button class="w-[13px] flex justify-center" aria-label="Apply scene"><svg class="size-[11px]"><use href="#scene"/></svg></button>
                <button class="w-[8px] flex justify-center" aria-label="Scene menu"><svg class="size-[4px]"><use href="#dot"/></svg></button>
                <button class="w-[13px] flex justify-center" aria-label="View settings"><svg class="size-[11px]"><use href="#monitor"/></svg></button>
                <button class="w-[8px] flex justify-center" aria-label="View settings menu"><svg class="size-[4px]"><use href="#dot"/></svg></button>
                <button class="w-[14px] flex justify-center text-[#4a86b3]" aria-label="3D view"><svg class="size-[10px]"><use href="#cube"/></svg></button>
                <button class="w-[14px] flex justify-center" aria-label="Shadows"><svg class="size-[10px]" viewBox="0 0 12 12"><circle cx="6" cy="6" r="4.500" fill="#eee" stroke="#ccc"/><circle cx="4.800" cy="4.500" r="1.500" fill="#fff"/></svg></button>
                <button class="w-[14px] flex justify-center" aria-label="Triad"><svg class="size-[11px]"><use href="#triadup"/></svg></button>
            </div>

            <div class="absolute left-[10px] top-[7px] text-[8px] leading-[11px]">
                <p>Model name: Part1</p>
                <p>Study name: Static 1(-Default&lt;As Machined&gt;-)</p>
                <p>Plot type:&nbsp; Shear-Moment Plot2</p>
            </div>
            <p class="absolute left-[50px] top-[91px] text-[8px] font-['Liberation_Sans',sans-serif]">AHMED BAKRY</p>

            <!-- Beam with moment diagram -->
            <svg class="absolute left-[174px] top-[144px] w-[519px] h-[288px]" viewBox="298 224 519 288" shape-rendering="crispEdges" role="img" aria-label="Moment diagram">
                <defs>
                    <linearGradient id="moment" gradientUnits="userSpaceOnUse" x1="308" y1="0" x2="798" y2="0">
                        <stop offset="0" stop-color="#f00"/><stop offset=".016" stop-color="#f00"/><stop offset=".018" stop-color="#f50"/>
                        <stop offset=".024" stop-color="#ff8c00"/><stop offset=".042" stop-color="#ffb000"/><stop offset=".067" stop-color="#ff0"/>
                        <stop offset=".12" stop-color="#9f0"/><stop offset=".198" stop-color="#0f0"/><stop offset=".288" stop-color="#0ff"/>
                        <stop offset=".34" stop-color="#008cff"/><stop offset=".412" stop-color="#0010ff"/><stop offset=".422" stop-color="#00f"/><stop offset=".43" stop-color="#0010ff"/>
                        <stop offset=".494" stop-color="#0080ff"/><stop offset=".576" stop-color="#0ff"/><stop offset=".692" stop-color="#0f0"/>
                        <stop offset=".78" stop-color="#80ff00"/><stop offset=".82" stop-color="#a0ff00"/><stop offset=".878" stop-color="#ff0"/>
                        <stop offset=".91" stop-color="#ffc800"/><stop offset=".966" stop-color="#ff8000"/><stop offset=".967" stop-color="#f00"/><stop offset="1" stop-color="#f00"/>
                    </linearGradient>
                    <pattern id="hatch" x="299" y="225" width="36" height="22" patternUnits="userSpaceOnUse">
                        <rect width="36" height="22" fill="#c8c8c8"/>
                        <path d="M5.500 0v22M10.500 0v22M15.500 0v22M20.500 0v22M26.500 0v22M31.500 0v22" stroke="#858585"/>
                        <path d="M3.500 0v22M13.500 0v22M23.500 0v22M33.500 0v22" stroke="#b2b2b2"/>
                        <path d="M35.500 0v22" stroke="#777"/>
                    </pattern>
                </defs>
                <path fill="url(#moment)" d="M308 247L340 287 376 334 384 343 400 365 411 378 422 392 426 399 442 417 450 427 460 441 480 466 482 471 488 477 489 480 494 484 494 487 504 497 504 500 511 504 514 510 520 503 530 493 535 485 541 480 547 475 553 466 561 456 566 456 567 452 572 446 583 433 592 428 592 423 601 413 603 414 613 402 618 400 619 397 623 394 623 392 629 389 629 386 638 382 645 374 645 371 654 362 659 359 660 357 675 345 685 332 690 330 691 333 694 330 697 332 702 322 707 316 712 316 717 308 727 302 733 293 737 292 738 287 748 284 748 283 759 277 763 271 764 275 769 266 770 270 773 264 779 262 780 264 782 260 782 258 784 256 785 259 789 252 791 256 794 248 797 249 801 247z"/>
                <rect x="299" y="225" width="517" height="22" fill="url(#hatch)"/>
                <rect x="299" y="225" width="517" height="1" fill="#8a8a8a"/>
                <rect x="299" y="226" width="517" height="1" fill="#5f5f5f"/>
                <rect x="299" y="245" width="517" height="1" fill="#eaeaea"/>
                <rect x="299" y="246" width="517" height="1" fill="#8a8a8a"/>
                <rect x="299" y="235" width="216" height="2" fill="#f08a20"/>
            </svg>

            <!-- Colour legend -->
            <div class="absolute right-[86px] top-[84px] w-[93px] text-[8px] leading-[11px]">
                <p>Moment about Dir2 (N.m)</p>
                <div class="flex mt-[18px]">
                    <div class="w-[17px] h-[215px] border-y border-[#555] bg-[linear-gradient(to_bottom,#f00_0%,#ff0_20%,#0f0_50%,#0ff_70%,#00f_100%)]"></div>
                    <svg class="w-[2px] h-[215px]" viewBox="0 0 2 215" shape-rendering="crispEdges"><path d="M0 .5h2M0 21.500h2M0 42.500h2M0 64.500h2M0 85.500h2M0 107.500h2M0 128.500h2M0 149.500h2M0 171.500h2M0 192.500h2M0 214.500h2" stroke="#555"/></svg>
                    <ol class="h-[225px] -mt-[9px] ml-[6px] flex flex-col justify-between">
                        <li>5.284e-13</li>
                        <li>-3.986e-12</li>
                        <li>-8.501e-12</li>
                        <li>-1.302e-11</li>
                        <li>-1.753e-11</li>
                        <li>-2.204e-11</li>
                        <li>-2.656e-11</li>
                        <li>-3.107e-11</li>
                        <li>-3.559e-11</li>
                        <li>-4.010e-11</li>
                        <li>-4.462e-11</li>
                    </ol>
                </div>
            </div>

            <!-- Task pane -->
            <nav class="absolute right-0 top-[16px] w-[17px] bg-[#d6d6d6] border-l border-[#aaa] flex flex-col" aria-label="Task pane">
                <button class="h-[16px] flex items-center justify-center border-b border-[#aaa]" aria-label="Resources"><svg class="size-[11px]"><use href="#home"/></svg></button>
                <button class="h-[16px] flex items-center justify-center border-b border-[#aaa]" aria-label="Design library"><svg class="size-[11px]"><use href="#library"/></svg></button>
                <button class="h-[16px] flex items-center justify-center border-b border-[#aaa]" aria-label="File explorer"><svg class="size-[11px]"><use href="#openfolder"/></svg></button>
                <button class="h-[16px] flex items-center justify-center border-b border-[#aaa]" aria-label="View palette"><svg class="size-[11px]"><use href="#palette"/></svg></button>
                <button class="h-[16px] flex items-center justify-center border-b border-[#aaa]" aria-label="Appearances"><svg class="size-[10px]"><use href="#ball"/></svg></button>
                <button class="h-[16px] flex items-center justify-center border-b border-[#aaa]" aria-label="Custom properties"><svg class="size-[11px]"><use href="#list"/></svg></button>
            </nav>

            <!-- Triad -->
            <svg class="absolute left-[21px] bottom-[31px] w-[34px] h-[36px]" viewBox="0 0 34 36"><path d="M5.500 31V15" stroke="#1fb51f" stroke-width="1.600"/><path d="M3 16l2.500-6L8 16z" fill="#12b012"/><path d="M5 31h16" stroke="#b01a12" stroke-width="1.800"/><path d="M19 28.500l6 2.500-6 2.500z" fill="#b01a12"/><circle cx="5.500" cy="31" r="2.300" fill="#1a2aa8"/><path d="M5 3.500l1.500 1.700L8 3.500M6.500 5.200V7" fill="none" stroke="#7ee07e" stroke-width=".8"/><path d="M28 27.500l3 3.500m0-3.500l-3 3.500" stroke="#ee8070" stroke-width=".8"/></svg>
            <p class="absolute left-[6px] bottom-[1px] text-[8px] text-black">*Front</p>
        </main>
    </div>

    <!-- Model tabs -->
    <nav class="flex h-[12px] shrink-0 bg-white border-t border-[#a8a8a8] text-[#333] text-[8px] font-['Lato','Open_Sans',sans-serif]" aria-label="Model tabs">
        <button class="w-[11px] bg-[#b4b8c4] border-r border-[#8f95a8] flex items-center justify-center" aria-label="First tab"><svg class="size-[6px]" viewBox="0 0 6 6"><path d="M5 1v4L2 3zM1 1h.8v4H1z" fill="#7d8498"/></svg></button>
        <button class="w-[11px] bg-[#b4b8c4] border-r border-[#8f95a8] flex items-center justify-center" aria-label="Previous tab"><svg class="size-[6px]" viewBox="0 0 6 6"><path d="M4.500 1v4L1.500 3z" fill="#7d8498"/></svg></button>
        <button class="w-[11px] bg-[#b4b8c4] border-r border-[#8f95a8] flex items-center justify-center" aria-label="Next tab"><svg class="size-[6px]" viewBox="0 0 6 6"><path d="M1.500 1v4l3-2z" fill="#7d8498"/></svg></button>
        <button class="w-[11px] bg-[#b4b8c4] border-r border-[#8f95a8] flex items-center justify-center" aria-label="Last tab"><svg class="size-[6px]" viewBox="0 0 6 6"><path d="M1 1v4l3-2zM4.200 1H5v4h-.8z" fill="#7d8498"/></svg></button>
        <button class="w-[43px] bg-[#d2d2d2] border-r border-b border-[#a8a8a8]">Model</button>
        <button class="w-[45px] bg-[#d2d2d2] border-r border-b border-[#a8a8a8]">3D Views</button>
        <button class="w-[73px] bg-[#d2d2d2] border-r border-b border-[#a8a8a8]">Motion Study 1</button>
        <button class="w-[53px] bg-white border-r border-[#a8a8a8] font-bold text-black flex items-center pl-[3px] gap-[2px]"><svg class="size-[7px]" viewBox="0 0 7 7"><path d="M1 1l1.500 5L4 3l2-1" fill="none" stroke="#2b6594" stroke-width="1.200"/><path d="M4 1l1 1.500L6.500.5" fill="none" stroke="#444" stroke-width=".8"/></svg>Static 1</button>
    </nav>

    <!-- Status bar -->
    <footer class="flex items-center h-[12px] shrink-0 bg-[#f4f4f4] border-t border-b border-t-[#c8c8c8] border-b-[#555] text-[8px] font-['Lato','Open_Sans',sans-serif]">
        <span>SOLIDWORKS Premium 2021 SP0.0</span>
        <span class="ml-auto w-[73px]">Length: 1500mm</span>
        <span class="w-[107px]">Editing Part</span>
        <span class="w-[36px]">MMGS</span>
        <svg class="size-[5px]"><use href="#dot"/></svg>
        <svg class="size-[9px] ml-[10px] mr-[5px]"><use href="#fixtures"/></svg>
    </footer>
</body>
</html>
